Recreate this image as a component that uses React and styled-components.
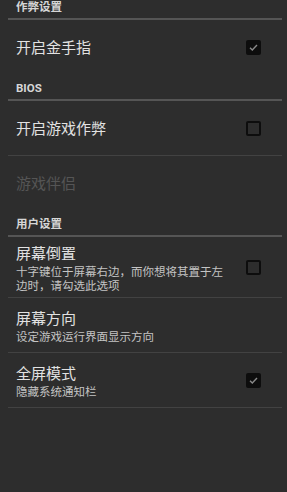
import React from "react";
import styled, { createGlobalStyle } from "styled-components";

const Global = createGlobalStyle`
  html, body {
    margin: 0;
    padding: 0;
    background: #2d2d2d;
    overflow: hidden;
  }
  body {
    font-family: "Noto Sans CJK SC", "Roboto", "Noto Sans", sans-serif;
  }
`;

const Screen = styled.div`
  width: 287px;
  height: 492px;
  background: #2d2d2d;
  overflow: hidden;
`;

const List = styled.div`
  margin: -7px 5px 0 8px;
`;

const Category = styled.div`
  height: 25px;
  display: flex;
  align-items: flex-end;
  padding: 0 0 4px 8px;
  box-sizing: border-box;
  border-bottom: 2px solid #555555;
  height: 27px;
  color: #d6d6d6;
  font-size: 11.5px;
  font-weight: bold;
  font-family: ${(p) => (p.$latin ? '"Roboto", sans-serif' : '"Noto Sans CJK SC", sans-serif')};
`;

const Item = styled.div`
  display: flex;
  align-items: center;
  box-sizing: border-box;
  min-height: ${(p) => (p.$divider ? 55 : 54)}px;
  padding: 5px 21px 5px 8px;
  border-bottom: ${(p) => (p.$divider ? "1px solid #424242" : "none")};
`;

const Texts = styled.div`
  flex: 1;
  display: flex;
  flex-direction: column;
`;

const Title = styled.div`
  font-size: 15px;
  line-height: 22px;
  color: ${(p) => (p.$disabled ? "#555555" : "#e2e2e2")};
`;

const Summary = styled.div`
  font-size: 11.5px;
  line-height: 14px;
  color: #c4c4c4;
  max-width: 212px;
`;

const Box = styled.div`
  width: 15px;
  height: 15px;
  box-sizing: border-box;
  border: 2px solid #0d0d0d;
  border-radius: 2px;
  background: ${(p) => (p.$checked ? "#0d0d0d" : "transparent")};
  display: flex;
  align-items: center;
  justify-content: center;
  flex-shrink: 0;
`;

const Checkbox = ({ checked }) => (
  <Box $checked={checked}>
    {checked && (
      <svg width="11" height="11" viewBox="0 0 11 11">
        <path d="M2 5.8 L4.3 8 L9 3" fill="none" stroke="#8a8a8a" strokeWidth="1.4" />
      </svg>
    )}
  </Box>
);

const App = () => (
  <Screen>
    <Global />
    <List>
      <Category>作弊设置</Category>
      <Item>
        <Texts>
          <Title>开启金手指</Title>
        </Texts>
        <Checkbox checked />
      </Item>

      <Category $latin>BIOS</Category>
      <Item $divider>
        <Texts>
          <Title>开启游戏作弊</Title>
        </Texts>
        <Checkbox />
      </Item>
      <Item>
        <Texts>
          <Title $disabled>游戏伴侣</Title>
        </Texts>
      </Item>

      <Category>用户设置</Category>
      <Item $divider>
        <Texts>
          <Title>屏幕倒置</Title>
          <Summary>十字键位于屏幕右边，而你想将其置于左边时，请勾选此选项</Summary>
        </Texts>
        <Checkbox />
      </Item>
      <Item $divider>
        <Texts>
          <Title>屏幕方向</Title>
          <Summary>设定游戏运行界面显示方向</Summary>
        </Texts>
      </Item>
      <Item $divider>
        <Texts>
          <Title>全屏模式</Title>
          <Summary>隐藏系统通知栏</Summary>
        </Texts>
        <Checkbox checked />
      </Item>
    </List>
  </Screen>
);

export default App;
